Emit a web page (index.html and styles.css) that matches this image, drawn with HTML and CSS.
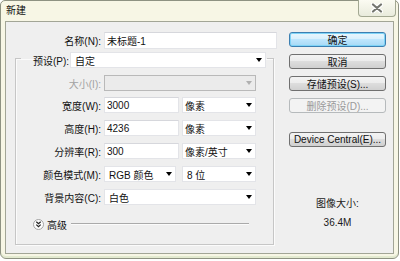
FILE: index.html
```
<!DOCTYPE html>
<html lang="zh">
<head>
<meta charset="utf-8">
<title>新建</title>
<link rel="stylesheet" href="styles.css">
</head>
<body>
<div class="window">
  <div class="titlebar">
    <span class="title">新建</span>
    <div class="close">
      <svg width="12" height="10" viewBox="0 0 12 10"><path d="M2 1.5 L10 8.5 M10 1.5 L2 8.5" stroke="#fff" stroke-width="4.4" stroke-linecap="round"/><path d="M2 1.5 L10 8.5 M10 1.5 L2 8.5" stroke="#74766f" stroke-width="2.2" stroke-linecap="round"/></svg>
    </div>
  </div>
  <div class="client">
    <div class="left">
      <div class="name-row">
        <span class="lbl name-lbl">名称(N):</span>
        <div class="field name-field">未标题-1</div>
      </div>
      <fieldset class="group">
        <legend class="preset">
          <div class="preset-inner">
            <span class="lbl">预设(P):</span>
            <div class="select preset-select"><span class="val">自定</span><i class="arrow"></i></div>
          </div>
        </legend>
        <div class="row r1">
          <span class="lbl disabled">大小(I):</span>
          <div class="select off w-full"><span class="val"></span><i class="arrow"></i></div>
        </div>
        <div class="row r2">
          <span class="lbl">宽度(W):</span>
          <div class="field w-num">3000</div>
          <div class="select w-unit"><span class="val">像素</span><i class="arrow"></i></div>
        </div>
        <div class="row">
          <span class="lbl">高度(H):</span>
          <div class="field w-num">4236</div>
          <div class="select w-unit"><span class="val">像素</span><i class="arrow"></i></div>
        </div>
        <div class="row">
          <span class="lbl">分辨率(R):</span>
          <div class="field w-num">300</div>
          <div class="select w-unit"><span class="val">像素/英寸</span><i class="arrow"></i></div>
        </div>
        <div class="row">
          <span class="lbl">颜色模式(M):</span>
          <div class="select w-mode"><span class="val">RGB 颜色</span><i class="arrow"></i></div>
          <div class="select w-unit w-bits"><span class="val">8 位</span><i class="arrow"></i></div>
        </div>
        <div class="row">
          <span class="lbl">背景内容(C):</span>
          <div class="select w-full"><span class="val">白色</span><i class="arrow"></i></div>
        </div>
        <div class="adv">
          <span class="adv-btn">
            <svg width="11" height="11" viewBox="0 0 11 11"><circle cx="5.5" cy="5.5" r="5" fill="#fdfdfd" stroke="#a3a3a3"/><path d="M3.3 2.8 L5.5 4.8 L7.7 2.8 M3.3 5.6 L5.5 7.6 L7.7 5.6" fill="none" stroke="#222" stroke-width="1.2"/></svg>
          </span>
          <span class="adv-text">高级</span>
          <span class="adv-line"></span>
        </div>
      </fieldset>
    </div>
    <div class="right">
      <div class="btn default">确定</div>
      <div class="btn">取消</div>
      <div class="btn">存储预设(S)...</div>
      <div class="btn disabled-btn">删除预设(D)...</div>
      <div class="btn device">Device Central(E)...</div>
      <div class="info">
        <div>图像大小:</div>
        <div>36.4M</div>
      </div>
    </div>
  </div>
</div>
</body>
</html>
```
FILE: styles.css
```
html, body {
  margin: 0;
  padding: 0;
  background: #ffffff;
}
body {
  font-family: "Liberation Sans", "Noto Sans CJK SC", sans-serif;
  font-size: 10px;
  color: #111;
}
.window {
  width: 399px;
  height: 259px;
  box-sizing: border-box;
  border: 1px solid #8e9282;
  border-radius: 5px 5px 6px 6px;
  background: #f7f6e5;
  padding: 0 4px 4px 4px;
  display: flex;
  flex-direction: column;
  box-shadow: inset 0 -2px 0 #e3ead0;
}
.titlebar {
  height: 20px;
  display: flex;
  align-items: flex-start;
  flex: none;
}
.title {
  padding-left: 1px;
  line-height: 20px;
  color: #111;
}
.close {
  margin-left: auto;
  margin-top: -1px;
  margin-right: -2px;
  width: 38px;
  height: 17px;
  box-sizing: border-box;
  border: 1px solid #a3a892;
  border-top: none;
  border-radius: 0 0 4px 4px;
  background: linear-gradient(#fbfbf2, #e9ebdc);
  display: flex;
  align-items: center;
  justify-content: center;
}
.client {
  flex: 1;
  border: 1px solid #a2a596;
  background: #efefef;
  display: flex;
}
.left {
  width: 271px;
  flex: none;
}
.lbl {
  white-space: nowrap;
}
.name-row {
  display: flex;
  align-items: center;
  margin-top: 10px;
  height: 17px;
}
.name-lbl {
  width: 95px;
  text-align: right;
  margin-right: 3px;
}
.field {
  box-sizing: border-box;
  background: #fff;
  border: 1px solid #e3e4e8;
  border-top-color: #d6d7dc;
  padding-left: 2px;
  display: flex;
  align-items: center;
  white-space: nowrap;
}
.name-field {
  width: 173px;
  height: 17px;
}
.group {
  margin: 0 0 0 9px;
  padding: 0 0 13px 0;
  width: 259px;
  box-sizing: border-box;
  min-width: 0;
  border: 1px solid #c6c6c6;
  box-shadow: inset 1px 1px 0 #fbfbfb, 1px 1px 0 #fbfbfb;
}
.preset {
  margin-left: 5px;
  padding: 3px 1px 0 12px;
}
.preset-inner {
  display: flex;
  align-items: center;
  height: 16px;
}
.select {
  box-sizing: border-box;
  height: 16px;
  background: #fff;
  border: 1px solid #e3e4e8;
  display: flex;
  align-items: center;
  padding-left: 4px;
  white-space: nowrap;
}
.select .val {
  flex: 1;
}
.arrow {
  width: 0;
  height: 0;
  border-left: 3.5px solid transparent;
  border-right: 3.5px solid transparent;
  border-top: 4px solid #000;
  margin-right: 3px;
}
.preset-select {
  width: 196px;
  margin-left: 1px;
}
.row {
  display: flex;
  align-items: center;
  height: 16px;
  margin-top: 7px;
}
.row.r2 {
  margin-top: 6px;
}
.row .lbl {
  width: 85px;
  text-align: right;
  margin-right: 3px;
  flex: none;
}
.row .field {
  height: 16px;
}
.disabled {
  color: #a2a2a2;
}
.select.off {
  background: #ebebeb;
  border-color: #b9b9b9;
}
.select.off .arrow {
  border-top-color: #b0b0b0;
}
.w-full {
  width: 152px;
}
.w-num {
  width: 75px;
}
.w-unit {
  width: 74px;
  margin-left: 3px;
  padding-left: 2px;
}
.w-mode {
  width: 72px;
}
.w-bits {
  margin-left: 6px;
  padding-left: 4px;
}
.adv {
  display: flex;
  align-items: center;
  height: 14px;
  margin-top: 12px;
  padding-left: 17px;
}
.adv-btn {
  display: flex;
  width: 11px;
  height: 11px;
}
.adv-text {
  margin-left: 3px;
}
.adv-line {
  flex: 1;
  height: 0;
  border-top: 1px solid #aaaaaa;
  border-bottom: 1px solid #fbfbfb;
  margin-left: 4px;
  margin-right: 24px;
}
.right {
  margin-left: 12px;
  padding-top: 10px;
  width: 97px;
  display: flex;
  flex-direction: column;
}
.btn {
  box-sizing: border-box;
  height: 15px;
  margin-bottom: 7px;
  border: 1px solid #707070;
  border-radius: 3px;
  background: linear-gradient(#f3f3f3 0%, #ececec 45%, #dddddd 50%, #d0d0d0 100%);
  display: flex;
  align-items: center;
  justify-content: center;
  white-space: nowrap;
  color: #111;
}
.btn.default {
  border-color: #3c7fb1;
  background: linear-gradient(#eaf6fd 0%, #d9f0fc 45%, #bee6fd 50%, #a7d9f5 100%);
  box-shadow: inset 0 0 0 1px #7fd4f7;
}
.btn.disabled-btn {
  border-color: #b6babc;
  background: #f3f3f3;
  color: #9a9a9a;
}
.btn.device {
  margin-top: 12px;
  margin-bottom: 0;
}
.info {
  margin-top: 47px;
  text-align: center;
  line-height: 19px;
  color: #1a1a1a;
}
```
